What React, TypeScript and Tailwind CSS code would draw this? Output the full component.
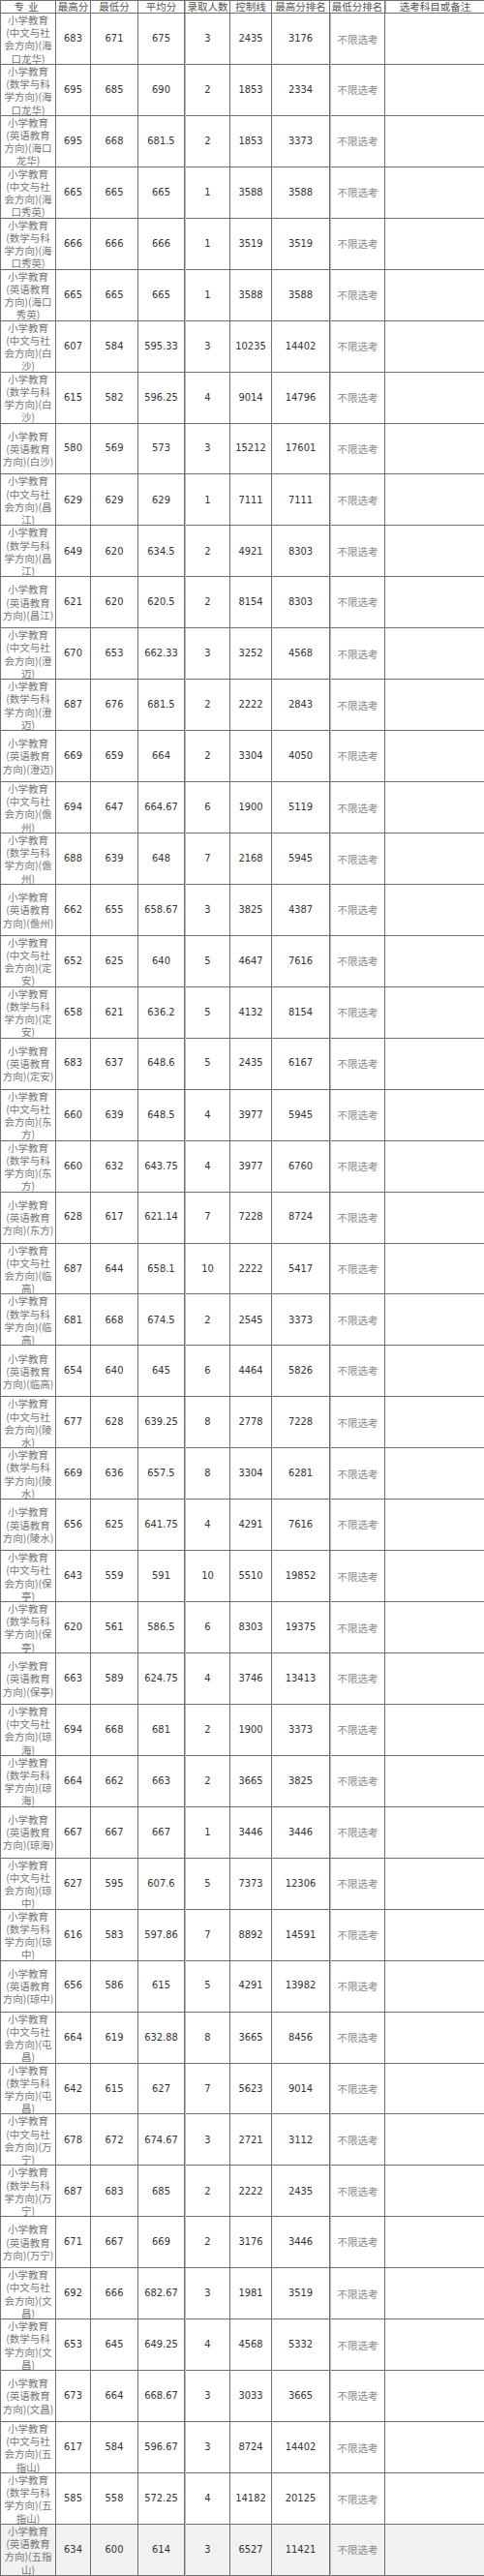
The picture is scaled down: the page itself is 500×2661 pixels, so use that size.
import React from 'react';

type Row = [string, string, string, string, string, string, string, string];

// 方向, 地区, 最高分, 最低分, 平均分, 录取人数, 最高分排名, 最低分排名
const rows: Row[] = [
    ['中文与社会', '海口龙华', '683', '671', '675', '3', '2435', '3176'],
    ['数学与科学', '海口龙华', '695', '685', '690', '2', '1853', '2334'],
    ['英语教育', '海口龙华', '695', '668', '681.5', '2', '1853', '3373'],
    ['中文与社会', '海口秀英', '665', '665', '665', '1', '3588', '3588'],
    ['数学与科学', '海口秀英', '666', '666', '666', '1', '3519', '3519'],
    ['英语教育', '海口秀英', '665', '665', '665', '1', '3588', '3588'],
    ['中文与社会', '白沙', '607', '584', '595.33', '3', '10235', '14402'],
    ['数学与科学', '白沙', '615', '582', '596.25', '4', '9014', '14796'],
    ['英语教育', '白沙', '580', '569', '573', '3', '15212', '17601'],
    ['中文与社会', '昌江', '629', '629', '629', '1', '7111', '7111'],
    ['数学与科学', '昌江', '649', '620', '634.5', '2', '4921', '8303'],
    ['英语教育', '昌江', '621', '620', '620.5', '2', '8154', '8303'],
    ['中文与社会', '澄迈', '670', '653', '662.33', '3', '3252', '4568'],
    ['数学与科学', '澄迈', '687', '676', '681.5', '2', '2222', '2843'],
    ['英语教育', '澄迈', '669', '659', '664', '2', '3304', '4050'],
    ['中文与社会', '儋州', '694', '647', '664.67', '6', '1900', '5119'],
    ['数学与科学', '儋州', '688', '639', '648', '7', '2168', '5945'],
    ['英语教育', '儋州', '662', '655', '658.67', '3', '3825', '4387'],
    ['中文与社会', '定安', '652', '625', '640', '5', '4647', '7616'],
    ['数学与科学', '定安', '658', '621', '636.2', '5', '4132', '8154'],
    ['英语教育', '定安', '683', '637', '648.6', '5', '2435', '6167'],
    ['中文与社会', '东方', '660', '639', '648.5', '4', '3977', '5945'],
    ['数学与科学', '东方', '660', '632', '643.75', '4', '3977', '6760'],
    ['英语教育', '东方', '628', '617', '621.14', '7', '7228', '8724'],
    ['中文与社会', '临高', '687', '644', '658.1', '10', '2222', '5417'],
    ['数学与科学', '临高', '681', '668', '674.5', '2', '2545', '3373'],
    ['英语教育', '临高', '654', '640', '645', '6', '4464', '5826'],
    ['中文与社会', '陵水', '677', '628', '639.25', '8', '2778', '7228'],
    ['数学与科学', '陵水', '669', '636', '657.5', '8', '3304', '6281'],
    ['英语教育', '陵水', '656', '625', '641.75', '4', '4291', '7616'],
    ['中文与社会', '保亭', '643', '559', '591', '10', '5510', '19852'],
    ['数学与科学', '保亭', '620', '561', '586.5', '6', '8303', '19375'],
    ['英语教育', '保亭', '663', '589', '624.75', '4', '3746', '13413'],
    ['中文与社会', '琼海', '694', '668', '681', '2', '1900', '3373'],
    ['数学与科学', '琼海', '664', '662', '663', '2', '3665', '3825'],
    ['英语教育', '琼海', '667', '667', '667', '1', '3446', '3446'],
    ['中文与社会', '琼中', '627', '595', '607.6', '5', '7373', '12306'],
    ['数学与科学', '琼中', '616', '583', '597.86', '7', '8892', '14591'],
    ['英语教育', '琼中', '656', '586', '615', '5', '4291', '13982'],
    ['中文与社会', '屯昌', '664', '619', '632.88', '8', '3665', '8456'],
    ['数学与科学', '屯昌', '642', '615', '627', '7', '5623', '9014'],
    ['中文与社会', '万宁', '678', '672', '674.67', '3', '2721', '3112'],
    ['数学与科学', '万宁', '687', '683', '685', '2', '2222', '2435'],
    ['英语教育', '万宁', '671', '667', '669', '2', '3176', '3446'],
    ['中文与社会', '文昌', '692', '666', '682.67', '3', '1981', '3519'],
    ['数学与科学', '文昌', '653', '645', '649.25', '4', '4568', '5332'],
    ['英语教育', '文昌', '673', '664', '668.67', '3', '3033', '3665'],
    ['中文与社会', '五指山', '617', '584', '596.67', '3', '8724', '14402'],
    ['数学与科学', '五指山', '585', '558', '572.25', '4', '14182', '20125'],
    ['英语教育', '五指山', '634', '600', '614', '3', '6527', '11421'],
];

const headers = ['专业', '最高分', '最低分', '平均分', '录取人数', '控制线', '最高分排名', '最低分排名', '选考科目或备注'];

const grid = 'grid grid-cols-[57px_36px_49px_48px_47px_43px_60px_57px_103px]';

// breaks the major name the way the narrow first column does
function wrapName(s: string): string[] {
    const unit = (c: string) => (c === '(' || c === ')' ? 0.36 : 1);
    const max = 4.75;
    const lines: string[] = [];
    let cur = '';
    let w = 0;
    const chars = Array.from(s);
    chars.forEach((c, i) => {
        let need = unit(c);
        if (c === '(' && chars[i + 1]) need += unit(chars[i + 1]);
        if (c !== ')' && w > 0 && w + need > max) {
            lines.push(cur);
            cur = '';
            w = 0;
        }
        cur += c;
        w += unit(c);
    });
    if (cur) lines.push(cur);
    return lines;
}

function Cell({ children, className = '' }: { children: React.ReactNode; className?: string }) {
    return (
        <div className={`flex items-center justify-center text-center border-r border-[#6f6f6f] ${className}`}>
            {children}
        </div>
    );
}

export default function App() {
    return (
        <div className="w-[500px] bg-white border-l border-t border-[#6f6f6f] font-['DejaVu_Sans_Condensed','DejaVu_Sans',sans-serif] text-[#333]">
            {/* Header */}
            <div className={`${grid} h-[13px] border-b border-[#6f6f6f] font-['Noto_Sans_CJK_SC',sans-serif] text-[10.5px] leading-[12px] text-[#555]`}>
                {headers.map((h, i) => (
                    <Cell key={h} className={`whitespace-nowrap ${i === 0 ? 'tracking-[4px]' : ''} ${i === 4 || i === 8 ? 'border-l border-l-[#b5b5b5]' : ''}`}>
                        {h}
                    </Cell>
                ))}
            </div>

            {/* Rows */}
            {rows.map((r, idx) => {
                const [dir, loc, ...nums] = r;
                const last = idx === rows.length - 1;
                return (
                    <div
                        key={idx}
                        className={`${grid} h-[52.94px] border-b border-[#6f6f6f] ${last ? 'bg-[#f1f1f1]' : ''}`}
                    >
                        <Cell className="flex-col font-['Noto_Sans_CJK_SC',sans-serif] text-[10.5px] leading-[13.2px] text-[#777]">
                            {wrapName(`小学教育(${dir}方向)(${loc})`).map((l, i) => (
                                <span key={i} className="block whitespace-nowrap">{l}</span>
                            ))}
                        </Cell>
                        {nums.map((n, i) => (
                            <Cell key={i} className={`text-[11px] ${i === 3 ? 'border-l border-l-[#b5b5b5]' : ''}`}>
                                {n}
                            </Cell>
                        ))}
                        <Cell className="border-l border-l-[#b5b5b5] font-['Noto_Sans_CJK_SC',sans-serif] text-[10.5px] text-[#8a8a8a]">
                            不限选考
                        </Cell>
                    </div>
                );
            })}
        </div>
    );
}
